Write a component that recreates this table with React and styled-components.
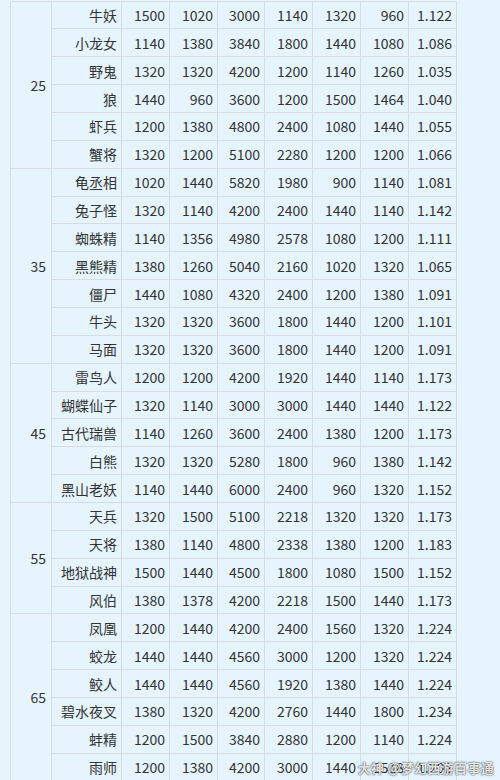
import React from 'react';
import styled, { createGlobalStyle } from 'styled-components';

const GlobalStyle = createGlobalStyle`
  html, body {
    margin: 0;
    padding: 0;
    background: #e6f5fd;
  }
  body {
    font-family: "Noto Sans CJK SC", "Noto Sans", sans-serif;
    color: #333;
    overflow: hidden;
  }
`;

const Page = styled.div`
  position: relative;
  width: 500px;
  height: 780px;
  overflow: hidden;
  padding: 0 0 0 10px;
  box-sizing: border-box;
`;

const Table = styled.table`
  border-collapse: collapse;
  table-layout: fixed;
  width: 446px;
  margin-top: 0.5px;
  font-size: 14px;
  background: #e5f4fd;
`;

const Cell = styled.td`
  border: 1px solid #d9dcdf;
  height: 26.86px;
  padding: 0 4px 0 0;
  text-align: right;
  line-height: 18px;
  white-space: nowrap;
  overflow: hidden;
`;

const LevelCell = styled(Cell)`
  vertical-align: middle;
  padding-right: 5px;
`;

const Watermark = styled.div`
  position: absolute;
  right: 6px;
  bottom: 3px;
  font-size: 13px;
  font-weight: bold;
  color: rgba(255, 255, 255, 0.85);
  text-shadow: 0 0 2px rgba(60, 60, 60, 0.8), 0 0 1px rgba(60, 60, 60, 0.9);
  letter-spacing: 0.3px;
`;

const widths = [41, 70, 48, 48, 47, 48, 48, 48, 48];

const groups = [
  {
    level: 25,
    rows: [
      ['牛妖', 1500, 1020, 3000, 1140, 1320, 960, '1.122'],
      ['小龙女', 1140, 1380, 3840, 1800, 1440, 1080, '1.086'],
      ['野鬼', 1320, 1320, 4200, 1200, 1140, 1260, '1.035'],
      ['狼', 1440, 960, 3600, 1200, 1500, 1464, '1.040'],
      ['虾兵', 1200, 1380, 4800, 2400, 1080, 1440, '1.055'],
      ['蟹将', 1320, 1200, 5100, 2280, 1200, 1200, '1.066'],
    ],
  },
  {
    level: 35,
    rows: [
      ['龟丞相', 1020, 1440, 5820, 1980, 900, 1140, '1.081'],
      ['兔子怪', 1320, 1140, 4200, 2400, 1440, 1140, '1.142'],
      ['蜘蛛精', 1140, 1356, 4980, 2578, 1080, 1200, '1.111'],
      ['黑熊精', 1380, 1260, 5040, 2160, 1020, 1320, '1.065'],
      ['僵尸', 1440, 1080, 4320, 2400, 1200, 1380, '1.091'],
      ['牛头', 1320, 1320, 3600, 1800, 1440, 1200, '1.101'],
      ['马面', 1320, 1320, 3600, 1800, 1440, 1200, '1.091'],
    ],
  },
  {
    level: 45,
    rows: [
      ['雷鸟人', 1200, 1200, 4200, 1920, 1440, 1140, '1.173'],
      ['蝴蝶仙子', 1320, 1140, 3000, 3000, 1440, 1440, '1.122'],
      ['古代瑞兽', 1140, 1260, 3600, 2400, 1380, 1200, '1.173'],
      ['白熊', 1320, 1320, 5280, 1800, 960, 1380, '1.142'],
      ['黑山老妖', 1140, 1440, 6000, 2400, 960, 1320, '1.152'],
    ],
  },
  {
    level: 55,
    rows: [
      ['天兵', 1320, 1500, 5100, 2218, 1320, 1320, '1.173'],
      ['天将', 1380, 1140, 4800, 2338, 1380, 1200, '1.183'],
      ['地狱战神', 1500, 1440, 4500, 1800, 1080, 1500, '1.152'],
      ['风伯', 1380, 1378, 4200, 2218, 1500, 1440, '1.173'],
    ],
  },
  {
    level: 65,
    rows: [
      ['凤凰', 1200, 1440, 4200, 2400, 1560, 1320, '1.224'],
      ['蛟龙', 1440, 1440, 4560, 3000, 1200, 1320, '1.224'],
      ['鲛人', 1440, 1440, 4560, 1920, 1380, 1440, '1.224'],
      ['碧水夜叉', 1380, 1320, 4200, 2760, 1440, 1800, '1.234'],
      ['蚌精', 1200, 1500, 3840, 2880, 1200, 1140, '1.224'],
      ['雨师', 1200, 1380, 4200, 3000, 1440, 1518, '1.208'],
    ],
  },
];

const App = () => {
  return (
    <Page>
      <GlobalStyle />
      <Table>
        <colgroup>
          {widths.map((w, i) => (
            <col key={i} style={{ width: w }} />
          ))}
        </colgroup>
        <tbody>
          {groups.map((group) =>
            group.rows.map((row, i) => (
              <tr key={group.level + '-' + i}>
                {i === 0 && <LevelCell rowSpan={group.rows.length}>{group.level}</LevelCell>}
                {row.map((value, j) => (
                  <Cell key={j}>{value}</Cell>
                ))}
              </tr>
            ))
          )}
        </tbody>
      </Table>
      <Watermark>大神 @梦幻西游百事通</Watermark>
    </Page>
  );
};

export default App;
